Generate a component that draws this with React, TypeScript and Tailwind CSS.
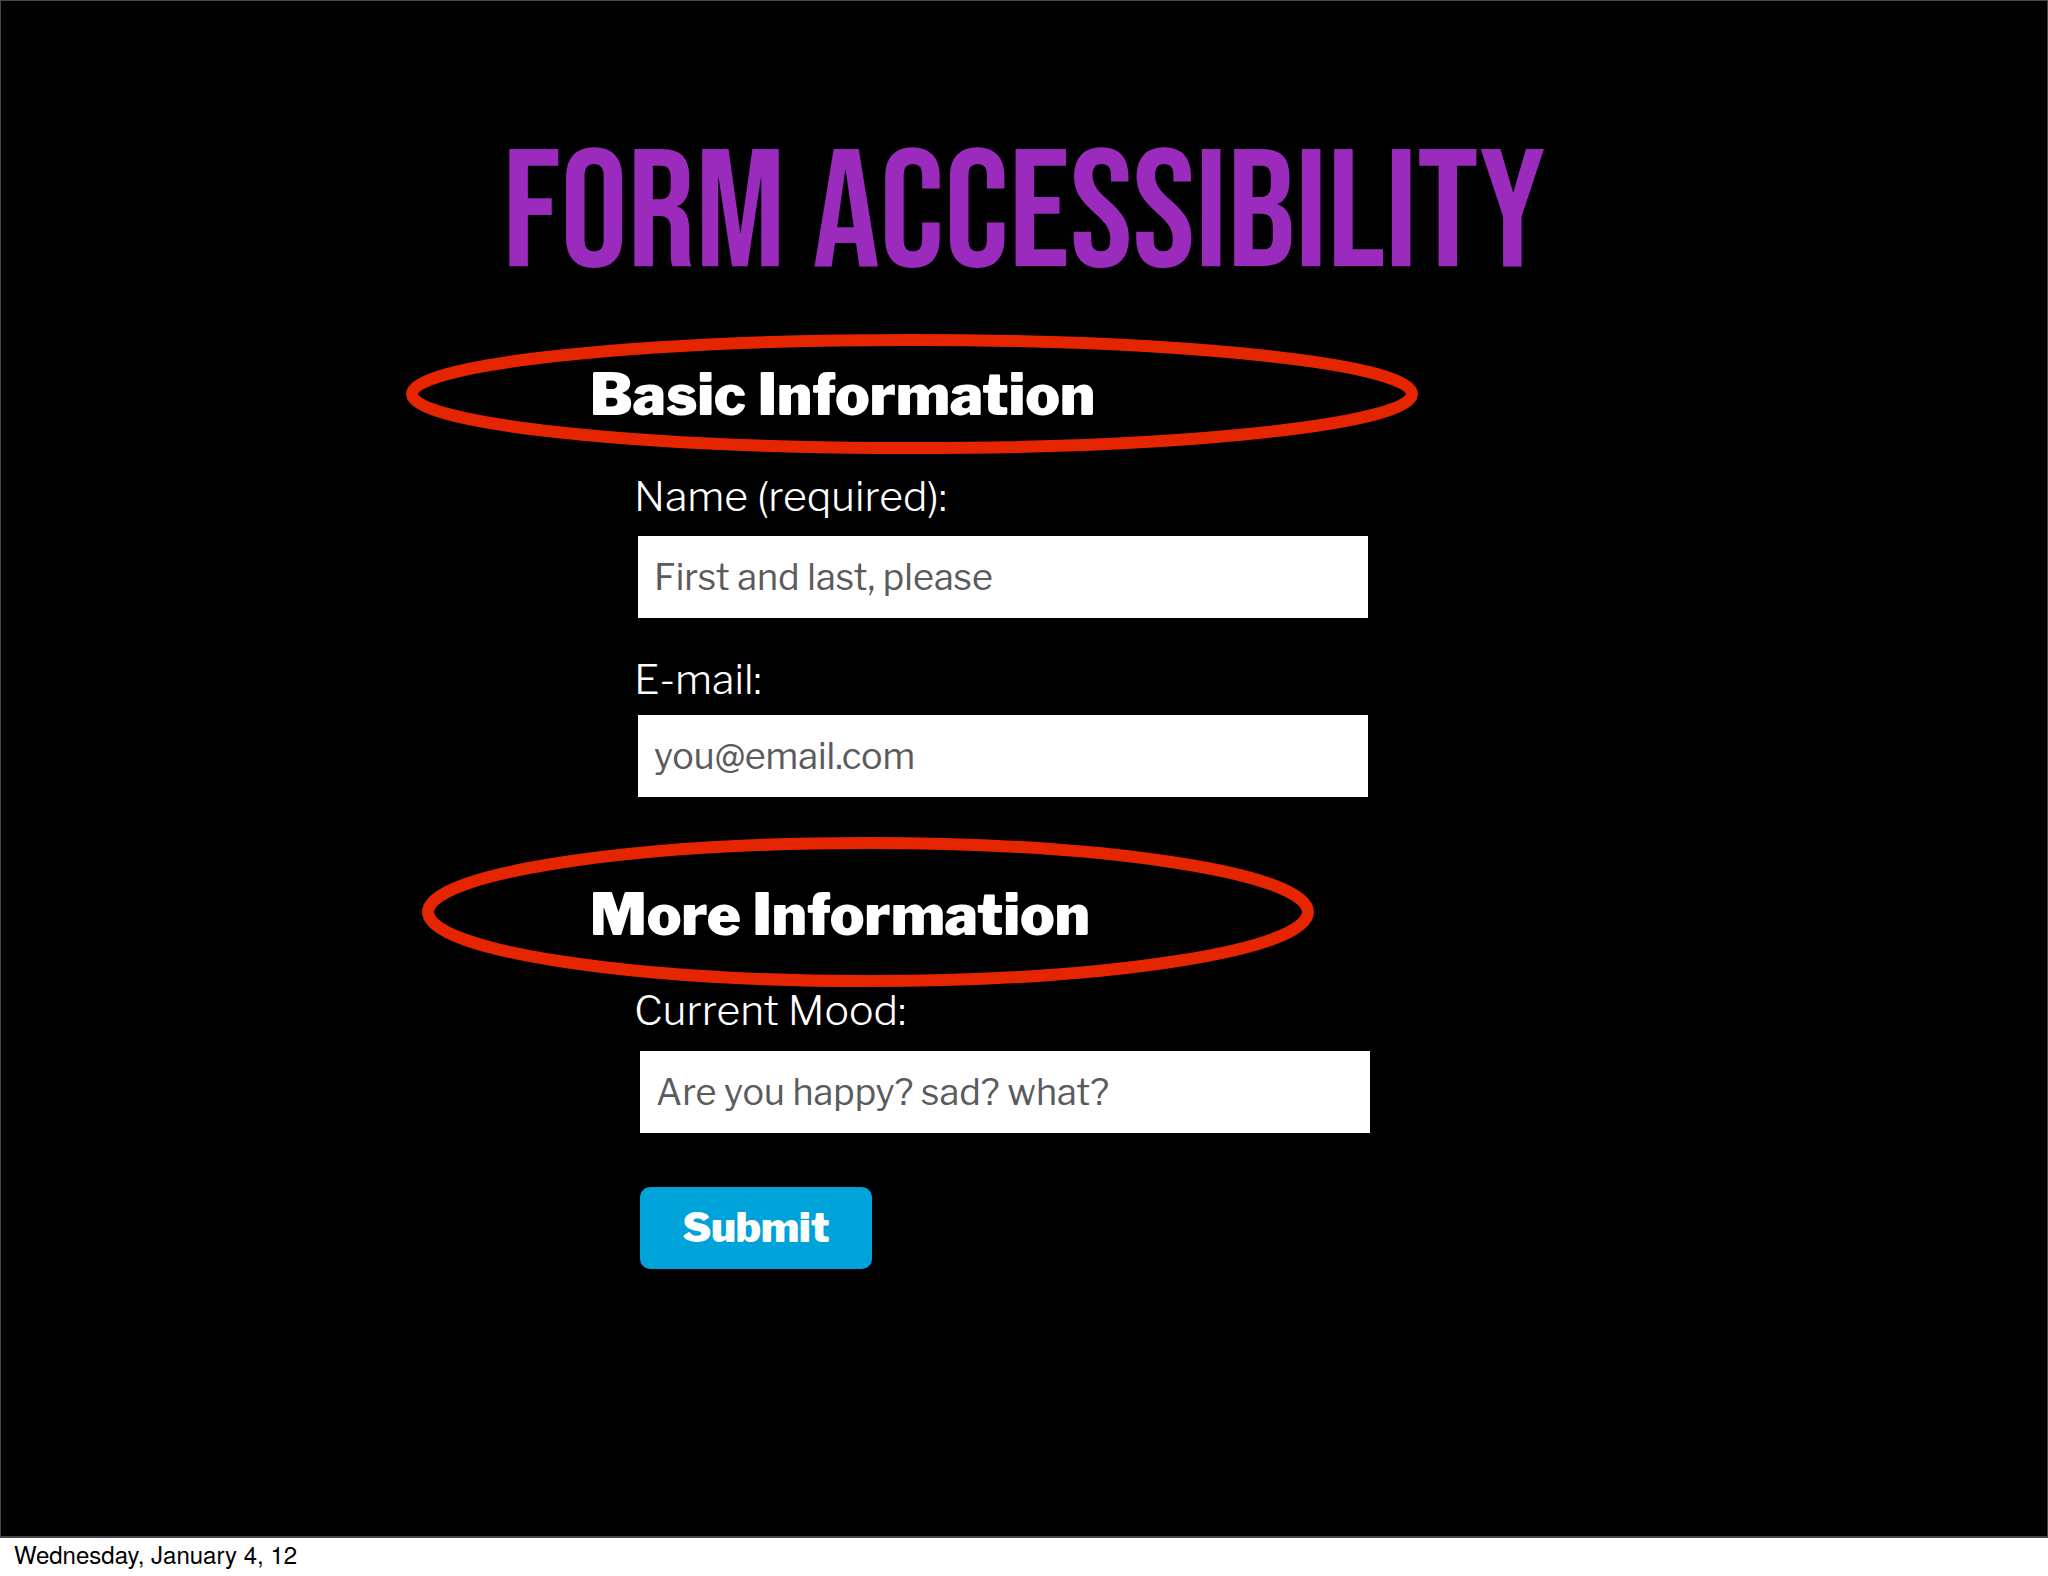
type FieldProps = {
  id: string;
  label: string;
  placeholder: string;
  type?: string;
  className?: string;
  inputClass?: string;
};

function Field({ id, label, placeholder, type = "text", className = "", inputClass = "" }: FieldProps) {
  return (
    <div className={`flex flex-col items-start ${className}`}>
      <label htmlFor={id} className="text-[41px] leading-[48px] font-light text-white">
        {label}
      </label>
      <input
        id={id}
        type={type}
        placeholder={placeholder}
        className={`h-[82px] w-full max-w-[730px] bg-white px-4 text-[36px] text-[#5b5b5d] placeholder:text-[#5b5b5d] ${inputClass}`}
      />
    </div>
  );
}

export default function App() {
  return (
    <div className="flex min-h-screen flex-col bg-white font-['Libre_Franklin','Open_Sans',sans-serif]">
      <main className="flex-1 border-t border-r border-b-2 border-l border-[#48484a] bg-black pt-[131px]">
        <h1 className="text-center font-['Bebas_Neue','Oswald','Roboto_Condensed',sans-serif] text-[168px] leading-[168px] font-normal text-[#9b2bbd] uppercase">
          Form Accessibility
        </h1>

        <form className="mx-auto mt-[62px] w-full max-w-[868px]" onSubmit={(e) => e.preventDefault()}>
          <section>
            <h2 className="relative text-[58px] leading-[64px] font-black text-white">
              Basic Information
              {/* Red marker ring */}
              <svg className="pointer-events-none absolute top-[-28px] left-[-184px] h-[120px] w-[1012px]" viewBox="0 0 1012 120" fill="none" aria-hidden="true">
                <ellipse cx="506" cy="60" rx="500" ry="54" stroke="#e52500" strokeWidth="12" />
              </svg>
            </h2>
            <div className="mt-[46px] pl-11">
              <Field id="name" label="Name (required):" placeholder="First and last, please" inputClass="mt-4 ml-1" />
              <Field id="email" label="E-mail:" type="email" placeholder="you@email.com" className="mt-[37px]" inputClass="mt-3 ml-1" />
            </div>
          </section>

          <section className="mt-[85px]">
            <h2 className="relative text-[58px] leading-[64px] font-black text-white">
              More Information
              <svg className="pointer-events-none absolute top-[-45px] left-[-168px] h-[150px] w-[892px]" viewBox="0 0 892 150" fill="none" aria-hidden="true">
                <ellipse cx="446" cy="75" rx="440" ry="69" stroke="#e52500" strokeWidth="12" />
              </svg>
            </h2>
            <div className="mt-10 pl-11">
              <Field id="mood" label="Current Mood:" placeholder="Are you happy? sad? what?" inputClass="mt-[17px] ml-1.5" />
              <button type="submit" className="mt-[54px] ml-1.5 h-[82px] w-[232px] rounded-[10px] bg-[#00a2da] text-[41px] font-black text-white">
                Submit
              </button>
            </div>
          </section>
        </form>
      </main>

      <footer className="px-[14px] pt-0.5 pb-2 font-['TeX_Gyre_Heros','Liberation_Sans',Arial,sans-serif] text-[24px] leading-[28px] text-black">
        Wednesday, January 4, 12
      </footer>
    </div>
  );
}
